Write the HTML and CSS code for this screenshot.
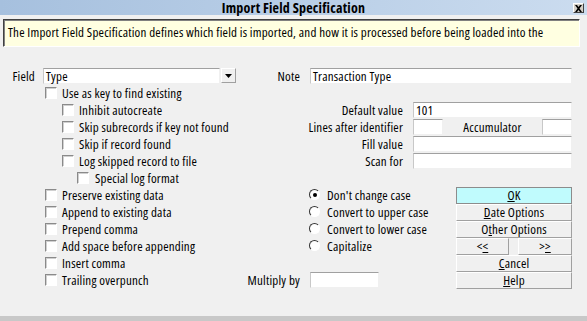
FILE: index.html
```html
<!DOCTYPE html>
<html lang="en">
<head>
	<meta charset="UTF-8">
	<title>Import Field Specification</title>
	<link rel="stylesheet" href="styles.css">
</head>
<body>
	<div class="window">

		<!-- TITLE BAR --------------------------------- -->
		<header class="titlebar">
			<span class="title">Import Field Specification</span>
			<span class="close">
				<svg width="9" height="7" viewBox="0 0 9 7"><path d="M1 0h2l1.5 2L6 0h2L5.5 3.5 8 7H6L4.5 5 3 7H1l2.5-3.5z" fill="#000"/></svg>
			</span>
		</header>

		<p class="hint">The Import Field Specification defines which field is imported, and how it is processed before being loaded into the</p>

		<!-- FORM --------------------------------- -->
		<main class="form">

			<section class="col-left">
				<div class="row">
					<span class="lbl lbl-field">Field</span>
					<span class="input combo-text">Type</span>
					<span class="combo-btn">
						<svg width="7" height="4" viewBox="0 0 7 4"><path d="M0 0h7L3.5 4z" fill="#000"/></svg>
					</span>
				</div>
				<div class="row check lvl1"><span class="box"></span>Use as key to find existing</div>
				<div class="row check lvl2"><span class="box"></span>Inhibit autocreate</div>
				<div class="row check lvl2"><span class="box"></span>Skip subrecords if key not found</div>
				<div class="row check lvl2"><span class="box"></span>Skip if record found</div>
				<div class="row check lvl2"><span class="box"></span>Log skipped record to file</div>
				<div class="row check lvl3"><span class="box"></span>Special log format</div>
				<div class="row check lvl1"><span class="box"></span>Preserve existing data</div>
				<div class="row check lvl1"><span class="box"></span>Append to existing data</div>
				<div class="row check lvl1"><span class="box"></span>Prepend comma</div>
				<div class="row check lvl1"><span class="box"></span>Add space before appending</div>
				<div class="row check lvl1"><span class="box"></span>Insert comma</div>
				<div class="row check lvl1"><span class="box"></span>Trailing overpunch</div>
			</section>

			<section class="col-right">
				<div class="row">
					<span class="lbl lbl-short">Note</span>
					<span class="input note">Transaction Type</span>
				</div>
				<div class="row"></div>
				<div class="row">
					<span class="lbl lbl-wide">Default value</span>
					<span class="input wide">101</span>
				</div>
				<div class="row">
					<span class="lbl lbl-wide">Lines after identifier</span>
					<span class="input small"></span>
					<span class="lbl lbl-acc">Accumulator</span>
					<span class="input small"></span>
				</div>
				<div class="row">
					<span class="lbl lbl-wide">Fill value</span>
					<span class="input wide"></span>
				</div>
				<div class="row">
					<span class="lbl lbl-wide">Scan for</span>
					<span class="input wide"></span>
				</div>
				<div class="row"></div>

				<div class="lower">
					<div class="options">
						<div class="row radio"><span class="dot on"></span>Don't change case</div>
						<div class="row radio"><span class="dot"></span>Convert to upper case</div>
						<div class="row radio"><span class="dot"></span>Convert to lower case</div>
						<div class="row radio"><span class="dot"></span>Capitalize</div>
						<div class="row"></div>
						<div class="row">
							<span class="lbl lbl-short">Multiply by</span>
							<span class="input multiply"></span>
						</div>
					</div>
					<div class="buttons">
						<span class="btn btn-ok"><u>O</u>K</span>
						<span class="btn"><u>D</u>ate Options</span>
						<span class="btn">O<u>t</u>her Options</span>
						<div class="btn-pair">
							<span class="btn">&lt;<u>&lt;</u></span>
							<span class="btn">&gt;<u>&gt;</u></span>
						</div>
						<span class="btn"><u>C</u>ancel</span>
						<span class="btn"><u>H</u>elp</span>
					</div>
				</div>
			</section>

		</main>

		<footer class="statusbar"></footer>
	</div>
</body>
</html>
```

FILE: styles.css
```css
/* GENERAL --------------------------------- */
* {
	box-sizing: border-box;
}
html,
body {
	margin: 0;
	padding: 0;
}
body {
	font-family: 'Open Sans', 'Liberation Sans', sans-serif;
	font-stretch: 75%;
	font-size: 13px;
	letter-spacing: 0.2px;
	color: #000;
	background-color: #f0f0f0;
}
.window {
	height: 100vh;
	display: flex;
	flex-direction: column;
}

/* TITLE BAR --------------------------------- */
.titlebar {
	height: 15px;
	display: flex;
	align-items: center;
	justify-content: center;
	position: relative;
	background: linear-gradient(to right, #a6c0de, #cbdcef);
}
.title {
	font-size: 14px;
	font-weight: bold;
	line-height: 15px;
}
.close {
	position: absolute;
	top: 3px;
	right: 3px;
	width: 11px;
	height: 10px;
	display: flex;
	align-items: center;
	justify-content: center;
	background-color: #d4d0c8;
	border: 1px solid;
	border-color: #fff #404040 #404040 #fff;
}

/* HINT --------------------------------- */
.hint {
	margin: 4px 7px 0 3px;
	height: 28px;
	padding: 0 4px;
	line-height: 25px;
	background-color: #ffffe1;
	border: 1px solid;
	border-color: #404040 #fff #fff #404040;
	box-shadow: inset 1px 1px #808080;
	white-space: nowrap;
	overflow: hidden;
}

/* FORM --------------------------------- */
.form {
	margin-top: 21px;
	display: flex;
}
.row {
	height: 17px;
	padding-bottom: 2px;
	display: flex;
	align-items: center;
	white-space: nowrap;
}
.col-left {
	width: 245px;
	display: flex;
	flex-direction: column;
}
.col-right {
	width: 327px;
	display: flex;
	flex-direction: column;
}
.lbl {
	flex-shrink: 0;
	text-align: right;
}
.lbl-field {
	width: 35px;
	margin-right: 8px;
}
.lbl-short {
	width: 55px;
	margin-right: 10px;
}
.lbl-wide {
	width: 158px;
	margin-right: 10px;
}
.lbl-acc {
	width: 99px;
	text-align: center;
}
.input {
	height: 16px;
	align-self: flex-start;
	padding: 0 2px;
	line-height: 14px;
	background-color: #fff;
	border: 1px solid;
	border-color: #a0a0a0 #f0f0f0 #f0f0f0 #c8c8c8;
}
.combo-text {
	width: 177px;
}
.combo-btn {
	width: 15px;
	height: 15px;
	margin-left: 1px;
	align-self: flex-start;
	display: flex;
	align-items: center;
	justify-content: center;
	background-color: #f0f0f0;
	border: 1px solid;
	border-color: #fff #a0a0a0 #a0a0a0 #fff;
}
.note {
	width: 262px;
}
.wide {
	width: 159px;
}
.small {
	width: 30px;
}
.multiply {
	width: 69px;
}

/* CHECKBOXES --------------------------------- */
.box {
	width: 12px;
	height: 12px;
	margin-right: 5px;
	flex-shrink: 0;
	background-color: #fff;
	border: 1px solid;
	border-color: #8a8a8a #fff #fff #8a8a8a;
	box-shadow: inset 1px 1px #d0d0d0;
}
.lvl1 {
	padding-left: 45px;
}
.lvl2 {
	padding-left: 62px;
}
.lvl3 {
	padding-left: 77px;
}
.lvl3 .box {
	margin-right: 6px;
}

/* RADIOS --------------------------------- */
.lower {
	display: flex;
}
.options {
	width: 211px;
	display: flex;
	flex-direction: column;
}
.radio {
	padding-left: 64px;
}
.dot {
	width: 11px;
	height: 11px;
	margin-right: 7px;
	flex-shrink: 0;
	border-radius: 50%;
	background-color: #fff;
	border: 1px solid;
	border-color: #333 #fff #fff #333;
	display: flex;
	align-items: center;
	justify-content: center;
}
.dot.on::after {
	content: '';
	width: 4px;
	height: 4px;
	border-radius: 50%;
	background-color: #000;
}

/* BUTTONS --------------------------------- */
.buttons {
	width: 116px;
	display: flex;
	flex-direction: column;
}
.btn {
	height: 17px;
	padding-bottom: 2px;
	display: flex;
	align-items: center;
	justify-content: center;
	background-color: #f0f0f0;
	border: 1px solid;
	border-color: #fff #a0a0a0 #a0a0a0 #fff;
}
.btn-ok {
	background-color: #c0fbfd;
	border-color: #8c8c8c;
}
.btn-pair {
	display: flex;
	justify-content: space-between;
}
.btn-pair .btn:first-child {
	width: 53px;
}
.btn-pair .btn:last-child {
	width: 54px;
}

/* STATUS BAR --------------------------------- */
.statusbar {
	margin-top: auto;
	height: 5px;
	background-color: #c8c8c8;
}
```
